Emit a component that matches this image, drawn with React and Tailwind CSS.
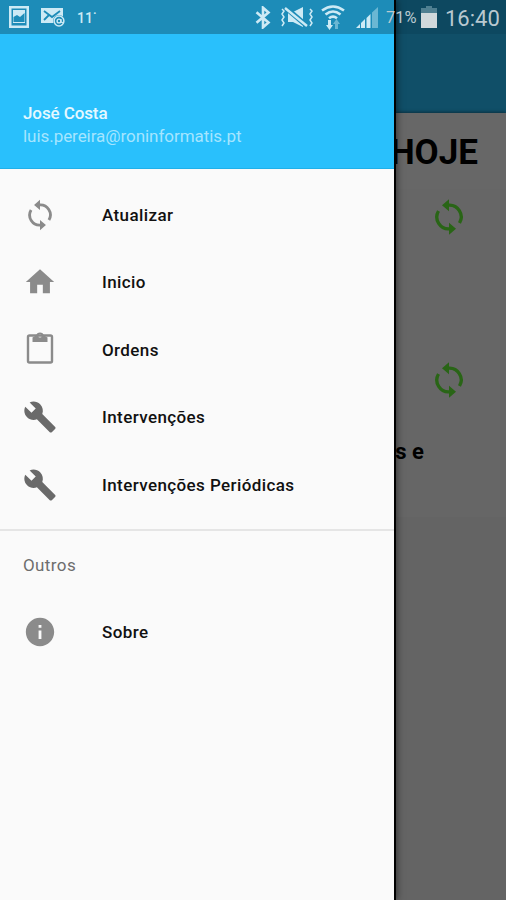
import React from 'react';
import { MdBuild, MdInfo } from 'react-icons/md';

const LoopIcon = ({ className }) => (
  <svg viewBox="0 0 24 24" fill="currentColor" className={className}>
    <path fill="none" stroke="currentColor" strokeWidth="2" d="M11.500 4.900A7.100 7.100 0 0 1 18.300 15.600M12.500 19.100A7.100 7.100 0 0 1 5.700 8.400" />
    <path d="M7.800 4.900L12 1.300v7.200zM16.200 19.100L12 22.700v-7.200z" />
  </svg>
);

const HomeIcon = ({ className }) => (
  <svg viewBox="0 0 24 24" fill="currentColor" className={className}>
    <path d="M10 20v-6h4v6h5v-8h3L12 3 2 12h3v8z" />
  </svg>
);

const ClipboardIcon = ({ className }) => (
  <svg viewBox="0 0 34 34" fill="none" stroke="currentColor" strokeWidth="2.4" className={className}>
    <rect x="5" y="2.5" width="24" height="27" rx="1.5" />
    <path fill="currentColor" stroke="none" fillRule="evenodd" d="M9.500 4.500L13.100 2.500a4 4 0 0 1 7.800 0l3.600 2V9h-15zM17 1.200a1.700 1.700 0 1 0 0 3.400 1.700 1.700 0 0 0 0-3.400z" />
  </svg>
);

const menuItems = [
  { label: 'Atualizar', icon: LoopIcon, tone: 'text-[#8b8b8b]' },
  { label: 'Inicio', icon: HomeIcon, tone: 'text-[#8b8b8b]' },
  { label: 'Ordens', icon: ClipboardIcon, tone: 'text-[#8b8b8b]' },
  { label: 'Intervenções', icon: MdBuild, tone: 'text-[#6a6a6a]' },
  { label: 'Intervenções Periódicas', icon: MdBuild, tone: 'text-[#6a6a6a]' },
];

const MenuItem = ({ item }) => {
  const Icon = item.icon;
  return (
    <li className="flex h-[67.5px] items-center pl-[23px]">
      <Icon className={`h-[34px] w-[34px] shrink-0 overflow-visible ${item.tone}`} />
      <span className="ml-[45px] pt-[1px] text-[17px] font-medium tracking-[0.4px] text-[#111]">{item.label}</span>
    </li>
  );
};

const StatusBar = () => (
  <div className="absolute inset-x-0 top-0 flex h-[34px] items-center text-[#cdeaf5]">
    {/* Notifications */}
    <svg viewBox="0 0 20 22" className="ml-[9px] h-[22px] w-5">
      <path fill="currentColor" fillRule="evenodd" d="M0 0h20v22H0zM2.500 2.500v17h15v-17z" />
      <path fill="currentColor" d="M4 4h12v13H4z" />
      <path fill="#1d8cb8" d="M4.500 16v-5l3.500-2 3 2 4.500-4v9z" />
    </svg>
    <svg viewBox="0 0 25 21" className="ml-3 h-[21px] w-[25px]">
      <path fill="currentColor" d="M0 1h22v15H0z" />
      <path fill="none" stroke="#1d8cb8" strokeWidth="1.800" d="M3 4l8 6 8-6M3 13l5-5" />
      <circle cx="18" cy="14" r="6" fill="#1d8cb8" />
      <circle cx="18" cy="14" r="4.900" fill="none" stroke="currentColor" strokeWidth="1.500" />
      <circle cx="18" cy="14" r="1.900" fill="none" stroke="currentColor" strokeWidth="1.400" />
      <path fill="none" stroke="currentColor" strokeWidth="1.200" d="M20 12v3.200l2 .3" />
    </svg>
    <span className="ml-[11px] w-[22px] pt-[2px] text-[14px] font-medium">11˙</span>

    {/* Connectivity */}
    <svg viewBox="0 0 16 23" className="ml-[156px] h-[23px] w-4 shrink-0" fill="none" stroke="currentColor" strokeWidth="2.600">
      <path d="M1.500 6.200l12 10.300L8 21.300V1.700l5.500 4.800-12 10.300" />
    </svg>
    <svg viewBox="0 0 34 22" className="ml-[9px] h-[22px] w-[34px] shrink-0">
      <path fill="currentColor" d="M8 6h5l10-5v20l-10-5H8z" />
      <path stroke="#1d8cb8" strokeWidth="5" d="M6 2l21 18" />
      <path stroke="currentColor" strokeWidth="2.400" d="M5 2l22 18" />
      <path fill="none" stroke="currentColor" strokeWidth="1.500" d="M2 3l2 2-2 3 2 3-2 3 2 3-2 3M30 3l2 2-2 3 2 3-2 3 2 3-2 3" />
    </svg>
    <svg viewBox="0 0 24 26" className="ml-[7px] h-[26px] w-6 shrink-0">
      <path fill="none" stroke="currentColor" strokeWidth="2.600" d="M1 6.500q11-8 22 0M4.500 10.500q7.500-6 15 0M8 14.300q4-3.400 8 0" />
      <path fill="currentColor" d="M7 16h3v5h2l-3.500 5L5 21h2z" />
      <path fill="currentColor" opacity=".45" d="M14 25v-5h-2l3.500-5 3.500 5h-2v5z" />
    </svg>
    <svg viewBox="0 0 23 23" className="ml-[11px] h-[23px] w-[23px] shrink-0">
      <path fill="currentColor" d="M0 22l4-4v4zM5 17l4-4v9H5zM10.500 12l4-4v14h-4z" />
      <path fill="currentColor" opacity=".45" d="M16 6.500L22 1v21h-6z" />
    </svg>
    <span className="ml-[7px] w-[32px] shrink-0 pt-[2px] text-[16.500px] text-[#b9c9d0]">71%</span>
    <svg viewBox="0 0 16 22" className="ml-[3px] h-[22px] w-4 shrink-0">
      <path fill="#4f7f91" d="M5 0h6v2h5v7H0V2h5z" />
      <path fill="#d0d8db" d="M0 7h16v15H0z" />
    </svg>
    <span className="ml-[8px] pt-[3px] text-[22px] text-[#b9c9d0]">16:40</span>
  </div>
);

const Backdrop = () => (
  <div className="flex h-full flex-col items-end bg-[#646464]">
    <div className="h-[34px] w-full shrink-0 bg-[#0d4860]" />
    <div className="h-[79px] w-full shrink-0 bg-[#104f68]" />
    <div className="h-[76px] w-full shrink-0 bg-[#676767] pr-[28px] pt-[16px] text-right shadow-[0_-1px_3px_rgba(0,0,0,0.4)]">
      <span className="text-[35px] font-bold leading-[48px] text-black">HOJE</span>
    </div>
    <div className="flex h-[328px] w-full shrink-0 flex-col items-end bg-[#666]">
      <LoopIcon className="mr-[37px] mt-[8px] h-10 w-10 text-[#296516]" />
      <LoopIcon className="mr-[37px] mt-[123px] h-10 w-10 text-[#296516]" />
      <p className="mr-[82px] mt-[37px] text-[22px] font-bold leading-[30px] text-black">s e</p>
    </div>
  </div>
);

const Drawer = () => (
  <aside className="absolute left-0 top-0 flex h-full w-[396px] flex-col border-r-2 border-black bg-[#fafafa] shadow-[1px_0_7px_rgba(0,0,0,0.5)]">
    <div className="h-[34px] shrink-0 bg-[#1d8cb8]" />
    <header className="flex h-[135px] shrink-0 flex-col justify-end border-b border-[#20b0e9] bg-[#29c0fc] pb-[20px] pl-[23px]">
      <p className="text-[17px] font-medium leading-[23px] tracking-[-0.1px] text-[#e5f8ff]">José Costa</p>
      <p className="text-[17px] leading-[23px] tracking-[-0.05px] text-[#a5e5ff]">luis.pereira@roninformatis.pt</p>
    </header>

    <ul className="pt-[12px]">
      {menuItems.map((item) => (
        <MenuItem key={item.label} item={item} />
      ))}
    </ul>

    {/* Other options */}
    <section className="mt-[10px] border-t-2 border-[#e5e5e5]">
      <h2 className="flex h-[67.500px] items-center pl-[23px] pt-[2px] text-[17px] tracking-[0.4px] text-[#6d6d6d]">Outros</h2>
      <ul>
        <MenuItem item={{ label: 'Sobre', icon: MdInfo, tone: 'text-[#8b8b8b]' }} />
      </ul>
    </section>
  </aside>
);

export default function App() {
  return (
    <div className="relative h-[900px] w-[506px] overflow-hidden font-[Roboto,sans-serif]">
      <Backdrop />
      <Drawer />
      <StatusBar />
    </div>
  );
}
